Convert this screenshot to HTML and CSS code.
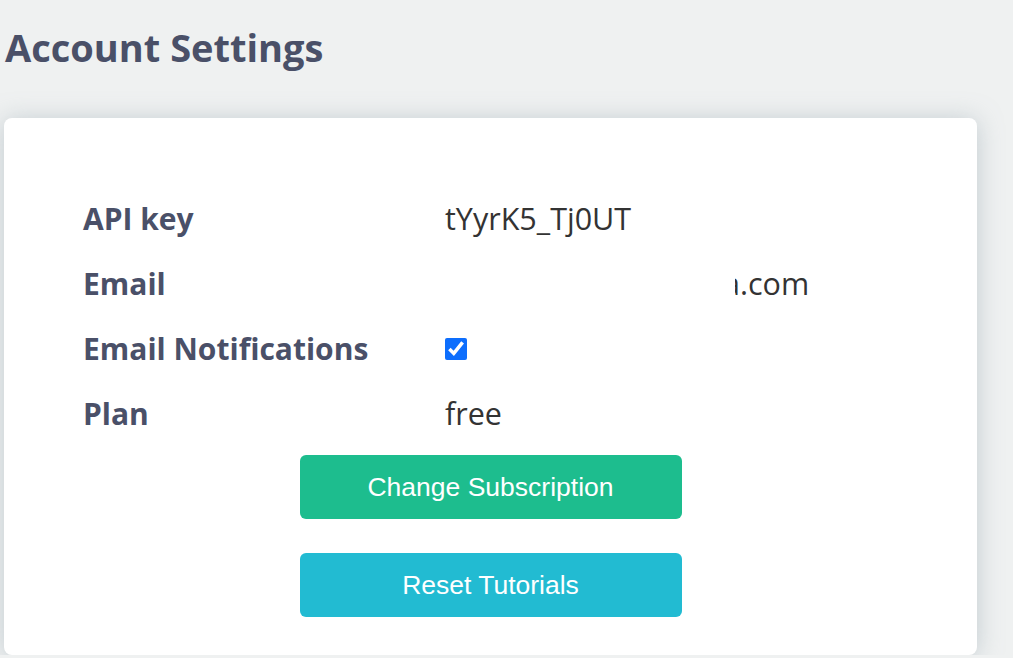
FILE: index.html
```html
<!DOCTYPE html>
<html>
<head>
    <title>Account Settings</title>
    <link rel="stylesheet" href="styles.css">
</head>
<body>
    <h2 class="page-title">Account Settings</h2>
    <div class="card">
        <div class="settings">
            <div class="label">API key</div>
            <div class="value">tYyrK5_Tj0UT</div>
            <div class="label">Email</div>
            <div class="value"><span class="blank"></span><span class="clip">a</span>.com</div>
            <div class="label">Email Notifications</div>
            <div class="value"><input type="checkbox" class="check" checked></div>
            <div class="label">Plan</div>
            <div class="value">free</div>
        </div>
        <div class="actions">
            <button class="btn btn-green">Change Subscription</button>
            <button class="btn btn-cyan">Reset Tutorials</button>
        </div>
    </div>
</body>
</html>
```

FILE: styles.css
```css
body {
    font-family: "Open Sans", sans-serif;
    margin: 0;
    padding: 0 36px 0 4px;
    background-color: #eff1f1;
    color: #4a5068;
}
.page-title {
    margin: 0;
    padding: 24px 0 0 1px;
    height: 118px;
    box-sizing: border-box;
    font-size: 38px;
    font-weight: 700;
    line-height: 46px;
}
.card {
    background: #fff;
    border-radius: 8px;
    box-shadow: 0 2px 24px rgba(150, 165, 175, 0.5);
    padding: 68px 0 36px 79px;
    height: 537px;
    box-sizing: border-box;
}
.settings {
    display: grid;
    grid-template-columns: 362px auto;
    grid-auto-rows: 65px;
}
.label {
    font-size: 30px;
    font-weight: 700;
    line-height: 65px;
}
.value {
    font-size: 30.5px;
    line-height: 65px;
    color: #333;
    display: flex;
    align-items: center;
}
.blank {
    display: inline-block;
    width: 290px;
}
.clip {
    display: inline-block;
    width: 5px;
    overflow: hidden;
    direction: rtl;
}
.check {
    width: 22px;
    height: 22px;
    margin: 0;
    accent-color: #0d6efd;
}
.actions {
    display: flex;
    flex-direction: column;
    align-items: center;
    gap: 34px;
    margin-left: -79px;
    margin-top: 9px;
}
.btn {
    width: 382px;
    height: 64px;
    border: none;
    border-radius: 6px;
    color: #fff;
    font-family: "Liberation Sans", Arial, sans-serif;
    font-size: 26.5px;
    cursor: pointer;
}
.btn-green {
    background-color: #1dbd8e;
}
.btn-cyan {
    background-color: #22bbd2;
}
```
